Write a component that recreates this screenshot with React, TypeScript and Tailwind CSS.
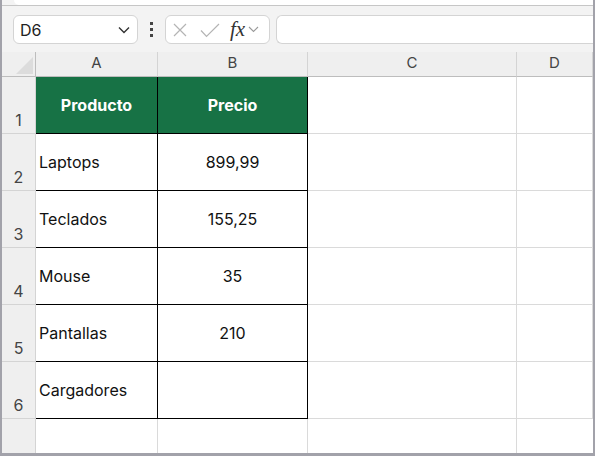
import React from 'react';

const ROWS: { label: string; producto: string; precio: string }[] = [
  { label: '2', producto: 'Laptops', precio: '899,99' },
  { label: '3', producto: 'Teclados', precio: '155,25' },
  { label: '4', producto: 'Mouse', precio: '35' },
  { label: '5', producto: 'Pantallas', precio: '210' },
  { label: '6', producto: 'Cargadores', precio: '' },
];

const font = { fontFamily: 'Inter, "Liberation Sans", Arial, sans-serif' };

const RowHeader = ({ n }: { n: string }) => (
  <div className="flex items-end justify-center border-r border-b border-[#d4d4d4] bg-[#efefef] pb-[1px] text-[16px] text-[#444]">
    {n}
  </div>
);

const Grid = () => <div className="border-r border-b border-[#dadada]" />;

export default function App() {
  return (
    <div
      className="flex h-[456px] w-[595px] flex-col overflow-hidden border-r-2 border-b-[3px] border-l-2 border-[#a2a2aa] bg-white"
      style={font}
    >
      {/* top strip */}
      <div className="flex h-[6px] shrink-0 border-b border-[#c6c6c6] bg-[#f3f3f3]">
        <div className="ml-[12px] h-[5px] flex-1 rounded-bl-md bg-white" />
      </div>

      {/* formula bar */}
      <div className="flex h-[46px] shrink-0 items-start bg-[#f3f3f3] pt-[9px]">
        <div className="ml-[11px] flex h-[29px] w-[125px] items-center justify-between rounded-md border border-[#d4d4d4] bg-white pr-[7px] pl-[6px]">
          <span className="text-[16px] text-[#222]">D6</span>
          <svg width="12" height="8" viewBox="0 0 12 8" fill="none">
            <path d="M1 1.5l5 5 5-5" stroke="#333" strokeWidth="1.4" />
          </svg>
        </div>
        <div className="flex w-[27px] flex-col items-center justify-center gap-[3px] pt-[7px]">
          <span className="h-[3px] w-[3px] bg-[#444]" />
          <span className="h-[3px] w-[3px] bg-[#444]" />
          <span className="h-[3px] w-[3px] bg-[#444]" />
        </div>
        <div className="flex h-[29px] w-[105px] items-center rounded-md border border-[#d4d4d4] bg-white pl-[6px]">
          <svg width="16" height="16" viewBox="0 0 16 16" fill="none">
            <path d="M2 2l12 12M14 2L2 14" stroke="#b4b4b4" strokeWidth="1.2" />
          </svg>
          <svg className="ml-[12px]" width="20" height="16" viewBox="0 0 20 16" fill="none">
            <path d="M1 8.5l5.5 6L19 2" stroke="#b4b4b4" strokeWidth="1.2" />
          </svg>
          <span
            className="ml-[10px] text-[21px] italic leading-none text-[#333]"
            style={{ fontFamily: '"Liberation Serif", "Times New Roman", serif' }}
          >
            fx
          </span>
          <svg className="ml-[3px]" width="11" height="7" viewBox="0 0 11 7" fill="none">
            <path d="M1 1l4.5 4.5L10 1" stroke="#999" strokeWidth="1.1" />
          </svg>
        </div>
        <div className="ml-[6px] h-[29px] flex-1 rounded-l-md border-y border-l border-[#d4d4d4] bg-white" />
      </div>

      {/* sheet */}
      <div className="grid flex-1 grid-cols-[34px_122px_150px_209px_1fr] grid-rows-[25px_57px_57px_57px_57px_57px_57px_1fr]">
        {/* column headers */}
        <div className="relative border-r border-b border-[#bdbdbd] bg-[#efefef]">
          <svg className="absolute right-[2px] bottom-[2px]" width="17" height="17" viewBox="0 0 17 17">
            <path d="M17 0V17H0Z" fill="#dcdcdc" />
          </svg>
        </div>
        {['A', 'B', 'C', 'D'].map(c => (
          <div
            key={c}
            className="flex items-end justify-center border-r border-b border-[#d4d4d4] border-b-[#bdbdbd] bg-[#efefef] pb-[2px] text-[15px] text-[#444]"
          >
            {c}
          </div>
        ))}

        {/* header row */}
        <RowHeader n="1" />
        <div className="flex items-center justify-center border-r border-b border-black bg-[#177245] text-[16px] font-bold text-white">
          Producto
        </div>
        <div className="flex items-center justify-center border-r border-b border-black bg-[#177245] text-[16px] font-bold text-white">
          Precio
        </div>
        <Grid />
        <Grid />

        {ROWS.map(r => (
          <React.Fragment key={r.label}>
            <RowHeader n={r.label} />
            <div className="flex items-center border-r border-b border-black pl-[3px] text-[16px] text-[#111]">
              {r.producto}
            </div>
            <div className="flex items-center justify-center border-r border-b border-black text-[16px] text-[#111]">
              {r.precio}
            </div>
            <Grid />
            <Grid />
          </React.Fragment>
        ))}

        <div className="border-r border-[#d4d4d4] bg-[#efefef]" />
        <div className="border-r border-[#dadada]" />
        <div className="border-r border-[#dadada]" />
        <div className="border-r border-[#dadada]" />
        <div />
      </div>
    </div>
  );
}
